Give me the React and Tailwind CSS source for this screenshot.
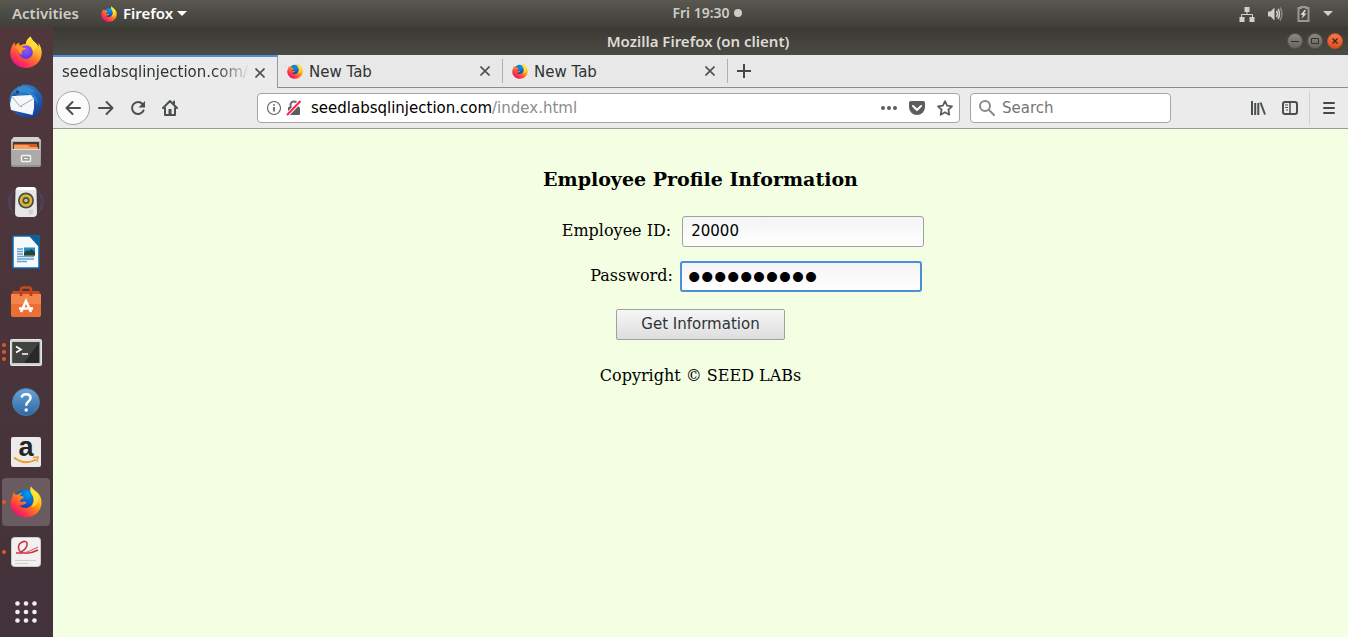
import React from "react";

function FirefoxQuantum({ className, id }) {
  return (
    <svg className={className} viewBox="0 0 32 32" aria-hidden="true">
      <defs>
        <linearGradient id={id + "a"} x1="0.9" y1="0.05" x2="0.2" y2="0.95">
          <stop offset="0" stopColor="#fff44f" />
          <stop offset="0.3" stopColor="#ffc022" />
          <stop offset="0.55" stopColor="#ff7a1c" />
          <stop offset="0.8" stopColor="#ff3548" />
          <stop offset="1" stopColor="#e80a82" />
        </linearGradient>
        <radialGradient id={id + "b"} cx="0.6" cy="0.2" r="0.9">
          <stop offset="0" stopColor="#00a0f0" />
          <stop offset="0.5" stopColor="#0a56c8" />
          <stop offset="1" stopColor="#20206e" />
        </radialGradient>
      </defs>
      <circle cx="15.5" cy="15" r="11.5" fill={`url(#${id}b)`} />
      <path
        d="M21 .5c-1 3-.8 5 .6 7.500C23.500 11 24 13.500 23 16.500c-1.200 3.500-4 5.500-7.700 5.500-2.500 0-5-1.200-6-3 1.800.8 3.400.3 4.800-.7.900-.6 2-.3 2.200-1 .2-.8-.8-1.900-2.200-1.700-1.400.2-2.400.9-4-.2.2-1.700 1.600-2.300 2.700-2.900.8-.4 1.200-2-.4-2.200l-2.200-.3c0-1.200 1-2.500 1.900-3.200-1.800.2-3.200 1-4.300 2-.9-.3-1.900-.2-2.600 0-.7-.7-1-2-1-3.200C3.300 7.500 2.700 9.200 2.400 10.800c-1 1.900-2 4.200-1.900 7C1 25.500 7.500 31.500 16 31.500S31.500 25 31.500 16.500c0-4.500-1.700-8-4.700-10.600C24.800 4.300 22.300 3 21 .5z"
        fill={`url(#${id}a)`}
      />
      <path d="M21 .5c-1 3-.8 5 .6 7.500 3.400 4.300 3 9-.1 13 5.500-1 8.500-6.500 6.400-12.200C26.500 5.500 22.500 4 21 .5z" fill="#ffe92e" opacity=".75" />
    </svg>
  );
}

function FirefoxModern() {
  return (
    <svg className="h-8 w-8" viewBox="0 0 32 32" aria-hidden="true">
      <defs>
        <linearGradient id="fm-a" x1="0.85" y1="0.05" x2="0.25" y2="0.95">
          <stop offset="0" stopColor="#fff44f" />
          <stop offset="0.35" stopColor="#ffb02a" />
          <stop offset="0.6" stopColor="#ff6a35" />
          <stop offset="0.85" stopColor="#ff2f5a" />
          <stop offset="1" stopColor="#e31587" />
        </linearGradient>
        <radialGradient id="fm-b" cx="0.5" cy="0.3" r="0.7">
          <stop offset="0" stopColor="#9059ff" />
          <stop offset="1" stopColor="#5b3ad0" />
        </radialGradient>
      </defs>
      <path
        d="M20.500.5c-3 2-4.500 5-4.700 7.500-2 0-3.600.4-5.300 1.500C9 8.800 9 7.500 9.300 6.500 7.600 7.200 6 8.600 5.200 9.700c-.5-.8-.5-2.500-.3-3.500C2.500 8 .3 12.500.3 17.200.3 25.500 7.200 32 16 32s15.700-6.800 15.700-15.200c0-4-1.400-7.500-3.600-10 .8 1.800.6 3.200.4 4C27 7 22 5 20.500.5z"
        fill="url(#fm-a)"
      />
      <circle cx="16" cy="16.300" r="6.800" fill="url(#fm-b)" />
      <path d="M5 10c3-1.400 6 .2 7 1.300 1.300.4 2.600.6 4 .7-.3 1.700-3.200 1.600-4 3.200-.6 1.300-.3 2.500.2 3.600-2.600-.5-4-3-3.800-5.200C7 13 5.500 12 5 10z" fill="#ff9a20" />
      <path d="M20.500.5c-3 2-4.500 5-4.700 7.500 4 .3 7.200 3.300 7.200 8 3-3 2.800-7 5.500-5.200C27 7 22 5 20.500.5z" fill="#ffe03a" opacity=".8" />
    </svg>
  );
}

function Thunderbird() {
  return (
    <svg className="h-9 w-9" viewBox="0 0 36 36" aria-hidden="true">
      <defs>
        <linearGradient id="tb" x1="0.3" y1="0" x2="0.8" y2="1">
          <stop offset="0" stopColor="#2f87cc" />
          <stop offset="0.5" stopColor="#1c62b8" />
          <stop offset="1" stopColor="#173a86" />
        </linearGradient>
      </defs>
      <path d="M14 1c8-1 13 1 16.500 6C34 10 35 15 34.500 20c-.3 3-1.500 5-3 7l-.5 3c-1.500 2-3.500 3.500-6 4.500l1-2.500c-3 1.800-6 2-9 1.500C8 32 1.500 26 1.500 17 1.500 11 4 7 7 5l4-3 .5 1z" fill="url(#tb)" />
      <path d="M10 4c7-3 14 0 18 5-2-1-4-1-6-1 5 2 8 7 8 13-4-9-10-13-20-13z" fill="#3e9bd8" opacity=".55" />
      <path d="M2 20l2-8 19-1 3 4v9l-1.500 7L3 26z" fill="#f5f7f9" />
      <path d="M4 12.500l8 10L25 15M12 22.500l2 .3" fill="none" stroke="#a2abb5" strokeWidth="1" />
      <circle cx="9.500" cy="8" r="1.500" fill="#173463" />
      <path d="M3 12c2-3 5-4 8-3l-3 3z" fill="#2f5f94" />
    </svg>
  );
}

function Files() {
  return (
    <svg className="h-8 w-8" viewBox="0 0 32 32" aria-hidden="true">
      <defs>
        <linearGradient id="fl" x1="0" y1="0" x2="0" y2="1">
          <stop offset="0" stopColor="#bcbcba" />
          <stop offset="1" stopColor="#929290" />
        </linearGradient>
      </defs>
      <path d="M4 1h24l3 3v25q0 2-2 2H3q-2 0-2-2V4z" fill="url(#fl)" />
      <path d="M4 1h24l3 4H1z" fill="#d3d3d1" />
      <path d="M3 6h26v7H3z" fill="#4a3732" />
      <path d="M4 8h23v5H4z" fill="#d85a22" />
      <path d="M4 9h14l2 2h8v2H4z" fill="#f3a064" />
      <path d="M2 13h28v16H2z" fill="#aaa" />
      <path d="M2 13h28v1H2z" fill="#deddda" />
      <rect x="11.500" y="19.500" width="9" height="6" rx="1" fill="#9b9b99" stroke="#f4f4f2" strokeWidth="1.500" />
      <path d="M14 22.500h4" stroke="#f4f4f2" />
    </svg>
  );
}

function Rhythmbox() {
  return (
    <svg className="h-8 w-9" viewBox="0 0 36 32" aria-hidden="true">
      <path d="M5 5q-5 11 0 22M31 5q5 11 0 22M2.500 8q-4 8 0 16M33.500 8q4 8 0 16" fill="none" stroke="#4d5a86" strokeWidth="1.500" opacity=".4" />
      <path d="M11 1h14q3 0 3.500 3l.5 23q0 4-4 4H11q-4 0-4-4l.5-23Q8 1 11 1z" fill="#e6e7e7" />
      <path d="M11 1h14q2 0 3 3H8q1-3 3-3z" fill="#fff" />
      <circle cx="18" cy="14.500" r="8" fill="#4a4b48" />
      <circle cx="18" cy="14.500" r="6.300" fill="#d5b730" />
      <circle cx="18" cy="14.500" r="3.500" fill="#55512c" />
      <circle cx="18" cy="14.500" r="1.800" fill="#b9c0c9" />
      <path d="M20 24l5-1v5l-4 1z" fill="#d2d3d4" />
    </svg>
  );
}

function Writer() {
  return (
    <svg className="h-[34px] w-7" viewBox="0 0 28 34" aria-hidden="true">
      <path d="M1 1h17l9 10v22H1z" fill="#f6f8fa" stroke="#086aa8" strokeWidth="1.500" />
      <path d="M18 0h10v11z" fill="#0d619c" />
      <path d="M5 14h6M5 16.500h6M5 19h6M5 21.500h17M5 24h17M5 26.500h10" stroke="#6aa3cb" strokeWidth="1.500" />
      <path d="M12 12.500h11v8H12z" fill="#1a8fcf" />
      <path d="M12 18l3-3 2 1 2-2 4 3v3.500H12z" fill="#28462f" />
    </svg>
  );
}

function Software() {
  return (
    <svg className="h-8 w-8" viewBox="0 0 32 32" aria-hidden="true">
      <path d="M11 8V4q0-2.500 2-2.500h6q2 0 2 2.500v4" fill="none" stroke="#c84a1d" strokeWidth="2.500" />
      <path d="M3 5h26l2 4H1z" fill="#c64b20" />
      <path d="M1 8h30v21q0 2-2 2H3q-2 0-2-2z" fill="#ec7036" />
      <path d="M1 8h30v10H1z" fill="#f3844b" />
      <path d="M11 10V6M21 10V6" stroke="#b83e15" strokeWidth="2.500" />
      <path d="M11 26l5-11 5 11M9 22.500h14" fill="none" stroke="#fff" strokeWidth="2.500" />
    </svg>
  );
}

function Terminal() {
  return (
    <svg className="h-7 w-8" viewBox="0 -1 32 28" aria-hidden="true">
      <rect x=".5" y=".5" width="31" height="26" rx="1" fill="#cfcfcd" stroke="#e7e7e4" />
      <path d="M2.500 3h27v21h-27z" fill="#272827" />
      <path d="M2.500 3h27L14 24H2.500z" fill="#414341" />
      <path d="M6 7.500l5 3-5 3" fill="none" stroke="#fff" strokeWidth="1.700" />
      <path d="M12 15h6" stroke="#fff" strokeWidth="1.500" />
    </svg>
  );
}

function Help() {
  return (
    <svg className="h-7 w-7" viewBox="0 0 28 28" aria-hidden="true">
      <defs>
        <linearGradient id="hp" x1="0" y1="0" x2="0" y2="1">
          <stop offset="0" stopColor="#6ba4d5" />
          <stop offset="1" stopColor="#2d68a5" />
        </linearGradient>
      </defs>
      <circle cx="14" cy="14" r="13.500" fill="url(#hp)" stroke="#4a7dae" />
      <path d="M9.500 9.500q1-3.200 4.600-3.200 4.400 0 4.400 3.800 0 2-2.300 3.700-2 1.500-2 4" fill="none" stroke="#fff" strokeWidth="2.500" />
      <circle cx="14.200" cy="22" r="1.700" fill="#fff" />
    </svg>
  );
}

function Amazon() {
  return (
    <svg className="h-[30px] w-[30px] overflow-visible" viewBox="0 0 30 30" aria-hidden="true">
      <rect width="30" height="30" rx="2" fill="#ebebea" />
      <text x="15" y="19" textAnchor="middle" fontFamily="Liberation Sans, sans-serif" fontWeight="700" fontSize="27" fill="#242424">a</text>
      <path d="M3 20.500q11 8.500 22 2" fill="none" stroke="#f29a22" strokeWidth="2" />
      <path d="M22 20.500l5-.5-1.200 4.800" fill="none" stroke="#f29a22" strokeWidth="1.500" />
    </svg>
  );
}

function Evince() {
  return (
    <svg className="h-[30px] w-[30px]" viewBox="0 0 30 30" aria-hidden="true">
      <rect x=".5" y=".5" width="29" height="29" rx="3" fill="#f1f1f0" stroke="#cfcdca" />
      <path d="M5 16c6 1 12-6 11-10-1-3.500-9-1-8.500 5 .5 7 12 6 19.500 2" fill="none" stroke="#cb3541" strokeWidth="1.600" />
      <path d="M5 16c6 2 12-1 22-6" fill="none" stroke="#dd6872" strokeWidth="1.200" />
      <path d="M4 23.500h21M4 26.500h13" stroke="#cfcfcf" strokeWidth="1" />
    </svg>
  );
}

function AppGrid() {
  return (
    <svg className="h-6 w-6" viewBox="0 0 24 24" fill="#f3eff0" aria-hidden="true">
      {[3.5, 12, 20.5].map((y) => [3.5, 12, 20.5].map((x) => <circle key={x + "-" + y} cx={x} cy={y} r="2.300" />))}
    </svg>
  );
}

const launchers = [
  { name: "Firefox", icon: <FirefoxModern /> },
  { name: "Thunderbird Mail", icon: <Thunderbird /> },
  { name: "Files", icon: <Files /> },
  { name: "Rhythmbox", icon: <Rhythmbox /> },
  { name: "LibreOffice Writer", icon: <Writer /> },
  { name: "Ubuntu Software", icon: <Software /> },
  { name: "Terminal", icon: <Terminal />, windows: 3 },
  { name: "Help", icon: <Help /> },
  { name: "Amazon", icon: <Amazon /> },
  { name: "Firefox Web Browser", icon: <FirefoxQuantum className="h-8 w-8" id="dock" />, windows: 1, active: true },
  { name: "Document Viewer", icon: <Evince />, windows: 1 },
];

function Dock() {
  return (
    <nav aria-label="Dock" className="flex w-[53px] shrink-0 flex-col items-center bg-linear-to-b from-[#50373c] to-[#43323a] pr-px">
      {launchers.map((app) => (
        <div key={app.name} className="flex h-[50px] w-full items-center justify-center">
          <button
            aria-label={app.name}
            className={
              app.active
                ? "relative flex h-12 w-12 items-center justify-center rounded-sm bg-[#6a5b61]"
                : "relative flex h-12 w-12 items-center justify-center rounded-sm"
            }
          >
            {app.icon}
            {app.windows && (
              <span className="absolute inset-y-0 left-0 flex flex-col items-center justify-center gap-[3px]">
                {Array.from({ length: app.windows }, (_, i) => (
                  <span key={i} className="h-1 w-1 rounded-full bg-[#e95420]" />
                ))}
              </span>
            )}
          </button>
        </div>
      ))}
      <button aria-label="Show Applications" className="mt-auto mb-[13px] flex h-6 w-12 items-center justify-center">
        <AppGrid />
      </button>
    </nav>
  );
}

function TopBar() {
  return (
    <header className="grid h-[27px] shrink-0 grid-cols-[1fr_auto_1fr] items-center bg-linear-to-b from-[#595750] to-[#403f3a] pr-3 pl-3 font-['Noto_Sans',sans-serif] text-[15px] font-semibold text-[#cfccc6]">
      <div className="flex items-center gap-[22px]">
        <button>Activities</button>
        <button className="flex items-center gap-1 text-white">
          <FirefoxQuantum className="mr-0.5 h-4 w-4" id="top" />
          Firefox
          <svg className="h-[5px] w-[10px]" viewBox="0 0 10 5" fill="#fff" aria-hidden="true"><path d="M0 0h10L5 5z" /></svg>
        </button>
      </div>
      <button className="flex items-center gap-1 pb-0.5 pl-[66px] text-sm">
        Fri 19:30
        <span className="h-2 w-2 rounded-full bg-[#cfccc6]" />
      </button>
      <div className="flex items-center justify-end gap-3 pr-[3px]">
        <svg className="h-4 w-4" viewBox="0 0 16 16" fill="#d3d0ca" aria-hidden="true"><path d="M5.500 1h5v5h-5zM.5 11h5v5h-5zM10.500 11h5v5h-5z" /><path d="M8 6v3M2.500 11V8.500h11V11" fill="none" stroke="#d3d0ca" /></svg>
        <svg className="h-4 w-4" viewBox="0 0 16 16" fill="#d3d0ca" aria-hidden="true"><path d="M1 5.500h2.500l4-4v13l-4-4H1z" /><path d="M9.500 5q2 3 0 6M11 3q3 5 0 10" fill="none" stroke="#d3d0ca" strokeWidth="1.500" /><path d="M13 1.500q4 6.500 0 13" fill="none" stroke="#8b8983" strokeWidth="1.500" /></svg>
        <svg className="h-4 w-4" viewBox="0 0 16 16" aria-hidden="true"><path d="M6 2V1h5v1h2.500v13h-10V2z" fill="none" stroke="#9a9791" strokeWidth="2" /><path d="M9.500 4l-4 5H8l-1.500 4 5-5.500H9L11 4z" fill="#e0ded9" /></svg>
        <svg className="h-[5px] w-[10px]" viewBox="0 0 10 5" fill="#d3d0ca" aria-hidden="true"><path d="M0 0h10L5 5z" /></svg>
      </div>
    </header>
  );
}

function TitleBar() {
  const base = "flex h-4 w-4 items-center justify-center rounded-full border border-[#55534d] ";
  return (
    <div className="grid h-7 grid-cols-[1fr_auto_1fr] items-center bg-linear-to-b from-[#3a3934] to-[#4c4a44] pr-[5px]">
      <span />
      <h1 className="font-['Noto_Sans',sans-serif] text-[15px] font-semibold text-[#dfdbd2]">Mozilla Firefox (on client)</h1>
      <div className="flex justify-end gap-1">
        <button aria-label="Minimize" className={base + "bg-linear-to-b from-[#8a8881] to-[#67655e]"}>
          <svg className="h-3 w-3" viewBox="0 0 12 12" stroke="#33312d" aria-hidden="true"><path d="M2 6.500h8" /></svg>
        </button>
        <button aria-label="Maximize" className={base + "bg-linear-to-b from-[#8a8881] to-[#67655e]"}>
          <svg className="h-3 w-3" viewBox="0 0 12 12" fill="none" stroke="#33312d" aria-hidden="true"><path d="M2.500 3.500h7v5h-7z" /></svg>
        </button>
        <button aria-label="Close" className="flex h-4 w-4 items-center justify-center rounded-full border border-[#c9501f] bg-linear-to-b from-[#f5794f] to-[#e04e1c]">
          <svg className="h-3 w-3" viewBox="0 0 12 12" stroke="#40231a" strokeWidth="1.300" aria-hidden="true"><path d="M3.500 3.500l5 5M8.500 3.500l-5 5" /></svg>
        </button>
      </div>
    </div>
  );
}

function CloseX() {
  return (
    <button aria-label="Close tab" className="flex h-5 w-5 shrink-0 items-center justify-center">
      <svg className="h-[10px] w-[10px]" viewBox="0 0 10 10" stroke="#4c5052" strokeWidth="1.600" aria-hidden="true"><path d="M.5.5l9 9M9.500.5l-9 9" /></svg>
    </button>
  );
}

function Tabs() {
  return (
    <div role="tablist" className="flex h-[33px] bg-[#e8e8e8] text-[15px] text-[#2e3436]">
      <div role="tab" aria-selected="true" className="flex w-[225px] items-center border-t-2 border-r border-t-[#4a90d9] border-r-[#999] bg-[#ebebeb] pr-[7px] pl-[9px]">
        <span className="flex-1 whitespace-nowrap mask-[linear-gradient(to_right,black_82%,transparent)]">seedlabsqlinjection.com/</span>
        <CloseX />
      </div>
      {["second", "third"].map((key) => (
        <div key={key} role="tab" aria-selected="false" className="flex w-[225px] items-center border-b border-[#8c8c8c]">
          <div className="flex h-6 flex-1 items-center border-r border-[#b0b0b0] pr-[7px] pl-[9px]">
            <FirefoxQuantum className="h-4 w-4 shrink-0" id={key} />
            <span className="flex-1 pt-0.5 pl-1.5">New Tab</span>
            <CloseX />
          </div>
        </div>
      ))}
      <div className="flex flex-1 items-center border-b border-[#8c8c8c] pl-[9px]">
        <button aria-label="New tab">
          <svg className="h-[14px] w-[14px]" viewBox="0 0 14 14" stroke="#43484a" strokeWidth="2" aria-hidden="true"><path d="M7 0v14M0 7h14" /></svg>
        </button>
      </div>
    </div>
  );
}

const stroke = { fill: "none", stroke: "#4a4f51", strokeWidth: 2, strokeLinecap: "round", strokeLinejoin: "round", "aria-hidden": true };

function NavBar() {
  return (
    <div className="flex h-[41px] items-center border-b border-[#9a9a9a] bg-[#ebebeb] pr-[11px] pl-[3px]">
      <button aria-label="Back" className="flex h-[34px] w-[34px] shrink-0 items-center justify-center rounded-full border border-[#a3a3a3] bg-[#fbfbfb]">
        <svg className="h-4 w-4" viewBox="0 0 16 16" {...stroke}><path d="M15 8H1.500M7.500 2l-6 6 6 6" /></svg>
      </button>
      <div className="flex shrink-0 gap-4 pl-2">
        <button aria-label="Forward"><svg className="h-4 w-4" viewBox="0 0 16 16" {...stroke}><path d="M1 8h13.500M8.500 2l6 6-6 6" /></svg></button>
        <button aria-label="Reload">
          <svg className="h-4 w-4" viewBox="0 0 16 16" {...stroke}><path d="M13.500 10.500A6 6 0 1 1 12.500 4" /><path d="M15 1v6.500H8.500z" fill="#4a4f51" stroke="none" /></svg>
        </button>
        <button aria-label="Home">
          <svg className="h-4 w-4" viewBox="0 0 16 16" {...stroke}><path d="M1 8l7-7 7 7M3 8v7h10V8" /><path d="M12 1.500v2" /><path d="M6.500 9h3v6h-3z" fill="#4a4f51" stroke="none" /></svg>
        </button>
      </div>
      <div className="ml-[79px] flex h-[30px] min-w-0 flex-1 items-center rounded-[4px] border border-[#a5a5a5] bg-white pr-[6px] pl-2">
        <svg className="h-4 w-4 shrink-0" viewBox="0 0 16 16" fill="none" stroke="#606060" aria-hidden="true"><circle cx="8" cy="8" r="6.500" strokeWidth="1.100" /><path d="M8 7v4.500M8 4.300v1.500" strokeWidth="1.700" /></svg>
        <svg className="ml-1 h-4 w-4 shrink-0" viewBox="0 0 16 16" aria-hidden="true"><path d="M4.500 7V5a3.500 3.500 0 0 1 7 0v2" fill="none" stroke="#6a6a6a" strokeWidth="2" /><rect x="2" y="7" width="12" height="8" rx="1" fill="#5c5c5c" /><path d="M1 15L14.500 1" stroke="#fff" strokeWidth="4" /><path d="M1 15L14.500 1" stroke="#ff1f4b" strokeWidth="2" /></svg>
        <span className="flex-1 truncate pl-[9px] text-[15px] text-[#8c8c8c]"><span className="text-black">seedlabsqlinjection.com</span>/index.html</span>
        <div className="flex shrink-0 items-center gap-3">
          <button aria-label="Page actions"><svg className="h-4 w-4" viewBox="0 0 16 16" fill="#5d5d5d" aria-hidden="true"><circle cx="2" cy="8" r="2" /><circle cx="8" cy="8" r="2" /><circle cx="14" cy="8" r="2" /></svg></button>
          <button aria-label="Save to Pocket"><svg className="h-4 w-4" viewBox="0 0 16 16" aria-hidden="true"><path d="M2 1h12q2 0 2 2v4a8 8 0 0 1-16 0V3q0-2 2-2z" fill="#5d5d5d" /><path d="M4 6l4 4 4-4" fill="none" stroke="#fff" strokeWidth="2" strokeLinecap="round" strokeLinejoin="round" /></svg></button>
          <button aria-label="Bookmark this page"><svg className="h-4 w-4" viewBox="0 0 16 16" fill="none" stroke="#5d5d5d" strokeWidth="1.800" strokeLinejoin="round" aria-hidden="true"><path d="M8 1.200l2.100 4.500 4.900.6-3.600 3.400.9 5L8 12.300l-4.300 2.400.9-5L1 6.300l4.900-.6z" /></svg></button>
        </div>
      </div>
      <label className="ml-[10px] flex h-[30px] w-[201px] shrink-0 items-center rounded-[4px] border border-[#a5a5a5] bg-white pl-2">
        <svg className="h-4 w-4 shrink-0" viewBox="0 0 16 16" fill="none" stroke="#8a8a8a" strokeWidth="2" strokeLinecap="round" aria-hidden="true"><circle cx="6" cy="6" r="5" /><path d="M10 10l5 5" /></svg>
        <input type="search" aria-label="Search" placeholder="Search" className="ml-[7px] w-full min-w-0 text-[15px] outline-none placeholder:text-[#757575]" />
      </label>
      <div className="ml-[79px] flex shrink-0 items-center gap-4">
        <button aria-label="Library"><svg className="h-4 w-4" viewBox="0 0 16 16" fill="none" stroke="#4a4f51" strokeWidth="2" aria-hidden="true"><path d="M2 1v14M5.200 3v12M8.300 3v12M10.500 2.500l4.500 12" /></svg></button>
        <button aria-label="Sidebars"><svg className="h-4 w-4" viewBox="0 0 16 16" fill="none" stroke="#4a4f51" aria-hidden="true"><rect x="1" y="2" width="14" height="12" rx="2" strokeWidth="2" /><path d="M8 2v12" strokeWidth="1.500" /><path d="M3 5h3M3 7.500h3M4 10h2" /></svg></button>
      </div>
      <div className="ml-[11px] flex h-[34px] shrink-0 items-center border-l border-[#d0d0d0] pl-[11px]">
        <button aria-label="Open menu"><svg className="h-4 w-4" viewBox="0 0 16 16" stroke="#43484a" strokeWidth="2" strokeLinecap="round" aria-hidden="true"><path d="M3 3h10M3 8h10M3 13h10" /></svg></button>
      </div>
    </div>
  );
}

function LoginPage() {
  return (
    <main className="flex flex-1 flex-col items-center bg-[#f3fee3] pt-[38px] font-['DejaVu_Serif',serif] text-base text-black">
      <h2 className="text-[19px] leading-6 font-bold">Employee Profile Information</h2>
      <form className="flex w-full flex-col items-center" onSubmit={(e) => e.preventDefault()}>
        <div className="mt-[25px] flex items-center gap-[11px] pl-[85px]">
          <label htmlFor="eid" className="pb-0.5">Employee ID:</label>
          <input id="eid" defaultValue="20000" className="h-[31px] w-[242px] rounded-[3px] border border-[#a0a0a0] bg-linear-to-b from-[#f4f4f4] to-white px-2 pb-0.5 font-['DejaVu_Sans',sans-serif] text-[15px] outline-none" />
        </div>
        <div className="mt-[14px] flex items-center gap-[7px] pl-[111px]">
          <label htmlFor="password" className="pb-0.5">Password:</label>
          <input
            id="password"
            type="password"
            defaultValue="seedseed20"
            className="h-[31px] w-[242px] rounded-[3px] border-2 border-[#4a90d9] bg-linear-to-b from-[#f4f4f4] to-white px-[6px] font-['Liberation_Sans',sans-serif] text-[37px] leading-[27px] outline-none"
          />
        </div>
        <button className="mt-[17px] h-[31px] w-[169px] rounded-[2px] border border-[#a0a0a0] bg-linear-to-b from-[#f6f6f6] to-[#dedede] font-['DejaVu_Sans',sans-serif] text-[15px] text-[#2e3436]">
          Get Information
        </button>
      </form>
      <p className="mt-6">Copyright © SEED LABs</p>
    </main>
  );
}

export default function App() {
  return (
    <div className="flex min-h-screen flex-col">
      <TopBar />
      <div className="flex flex-1">
        <Dock />
        <div className="flex min-w-0 flex-1 flex-col font-['DejaVu_Sans',sans-serif]">
          <TitleBar />
          <Tabs />
          <NavBar />
          <LoginPage />
        </div>
      </div>
    </div>
  );
}
